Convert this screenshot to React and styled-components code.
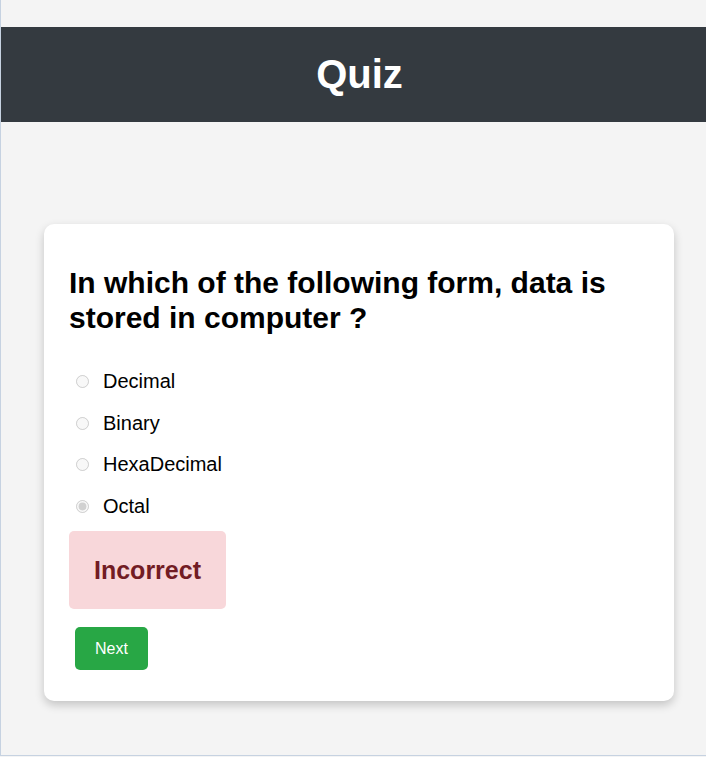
import styled, { createGlobalStyle } from "styled-components"

const GlobalStyle = createGlobalStyle`
    html, body {
        margin: 0;
        padding: 0;
        background-color: #f4f4f4;
        font-family: "Liberation Sans", Arial, sans-serif;
    }
`

const Page = styled.div`
    box-sizing: border-box;
    height: 756px;
    border-left: 1px solid #c6d2e1;
    border-bottom: 1px solid #c6d2e1;
    padding-top: 27px;
`

const Header = styled.header`
    background-color: #343a40;
    height: 95px;
    padding-left: 12px;
    display: flex;
    align-items: center;
    justify-content: center;

    h1 {
        margin: 0;
        color: #fff;
        font-size: 40px;
        font-weight: 700;
    }
`

const Card = styled.div`
    box-sizing: border-box;
    width: 630px;
    margin: 102px 0 0 43px;
    padding: 25px;
    background-color: #fff;
    border-radius: 10px;
    box-shadow: 0 4px 10px rgba(0, 0, 0, 0.2);
`

const Question = styled.h2`
    margin: 17px 0 26px;
    font-size: 30px;
    line-height: 34.5px;
    font-weight: 700;
    color: #000;
`

const Options = styled.div`
    display: flex;
    flex-direction: column;
`

const Option = styled.label`
    display: flex;
    align-items: center;
    padding: 9px 0;
    font-size: 20px;
    line-height: 23.5px;
    color: #000;

    input {
        width: 13px;
        height: 13px;
        margin: 0 14px 0 7px;
    }
`

const Result = styled.div`
    display: inline-block;
    margin-top: 4px;
    padding: 25px;
    border-radius: 5px;
    background-color: ${(p) => (p.correct ? "#d4edda" : "#f8d7da")};
    color: ${(p) => (p.correct ? "#155724" : "#721c24")};

    h2 {
        margin: 0;
        font-size: 25px;
        line-height: 28px;
        font-weight: 700;
    }
`

const NextButton = styled.button`
    display: block;
    margin: 18px 0 6px 6px;
    padding: 12px 20px;
    border: none;
    border-radius: 5px;
    background-color: #28a745;
    color: #fff;
    font-family: "Liberation Sans", Arial, sans-serif;
    font-size: 16px;
    line-height: 19px;
    cursor: pointer;
`

const options = ["Decimal", "Binary", "HexaDecimal", "Octal"]

const App = () => {
    const selected = "Octal"

    return (
        <>
            <GlobalStyle />
            <Page>
                <Header>
                    <h1>Quiz</h1>
                </Header>
                <Card>
                    <Question>
                        In which of the following form, data is stored in
                        computer ?
                    </Question>
                    <Options>
                        {options.map((opt) => (
                            <Option key={opt}>
                                <input
                                    type="radio"
                                    name="answer"
                                    disabled
                                    defaultChecked={opt === selected}
                                />
                                {opt}
                            </Option>
                        ))}
                    </Options>
                    <Result correct={false}>
                        <h2>Incorrect</h2>
                    </Result>
                    <NextButton>Next</NextButton>
                </Card>
            </Page>
        </>
    )
}

export default App
